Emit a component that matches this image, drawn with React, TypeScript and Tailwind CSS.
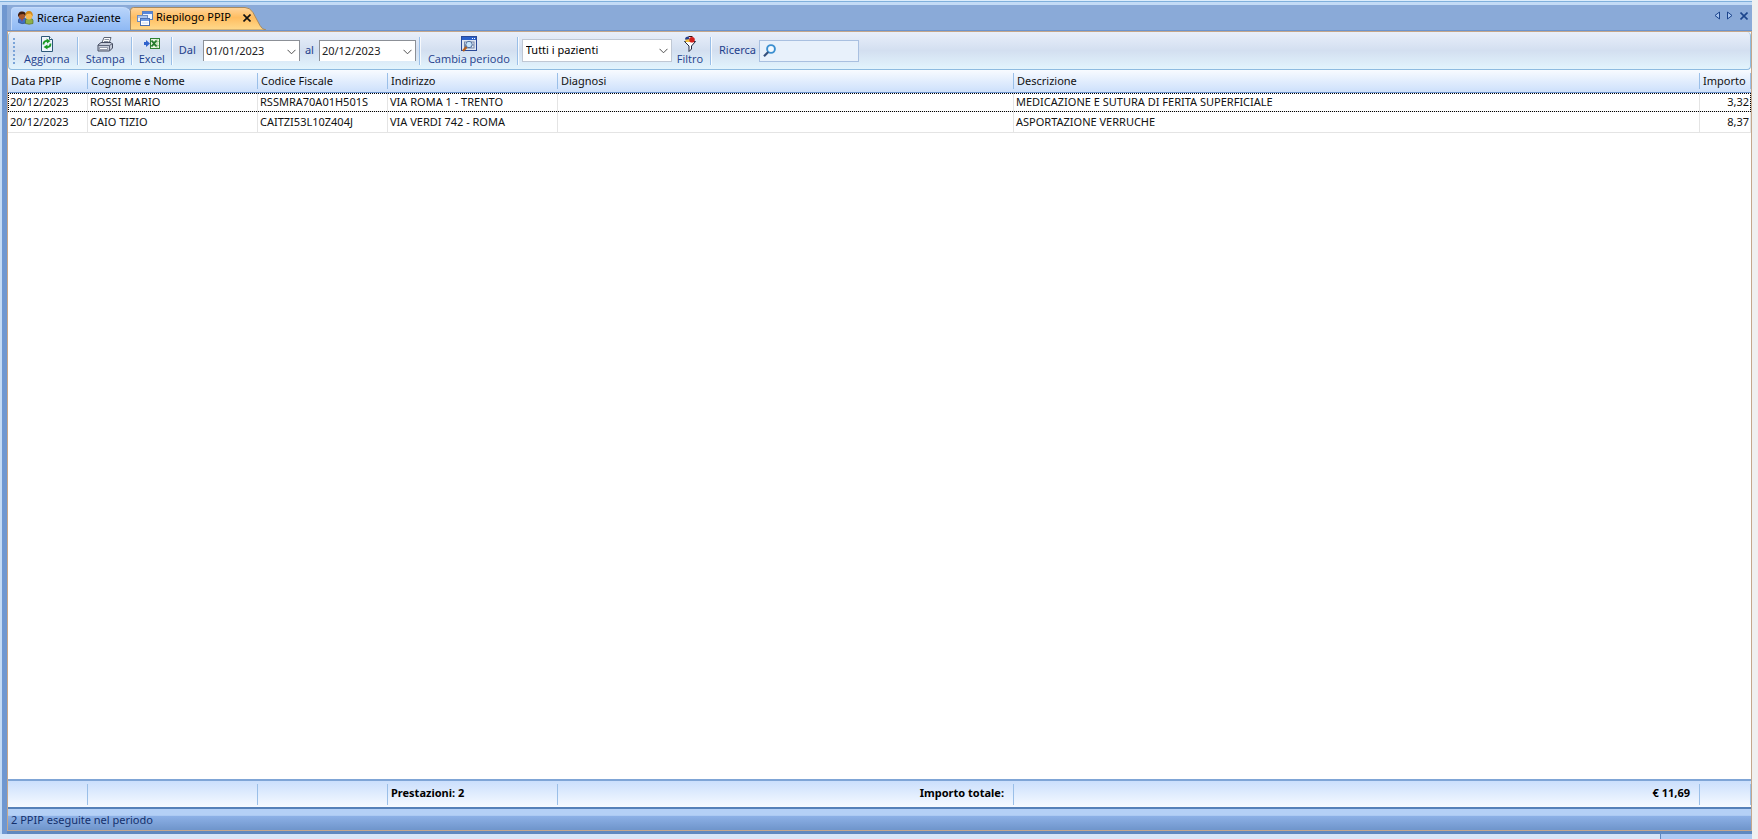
import type { ReactNode } from 'react';

const columns = [
  { key: 'data', label: 'Data PPIP', width: 'w-[80px]' },
  { key: 'nome', label: 'Cognome e Nome', width: 'w-[170px]' },
  { key: 'codice', label: 'Codice Fiscale', width: 'w-[130px]' },
  { key: 'indirizzo', label: 'Indirizzo', width: 'w-[170px]' },
  { key: 'diagnosi', label: 'Diagnosi', width: 'w-[456px]' },
  { key: 'descrizione', label: 'Descrizione', width: '' },
  { key: 'importo', label: 'Importo', width: 'w-[51px]' },
] as const;

type Row = Record<(typeof columns)[number]['key'], string>;

const rows: Row[] = [
  {
    data: '20/12/2023',
    nome: 'ROSSI MARIO',
    codice: 'RSSMRA70A01H501S',
    indirizzo: 'VIA ROMA 1 - TRENTO',
    diagnosi: '',
    descrizione: 'MEDICAZIONE E SUTURA DI FERITA SUPERFICIALE',
    importo: '3,32',
  },
  {
    data: '20/12/2023',
    nome: 'CAIO TIZIO',
    codice: 'CAITZI53L10Z404J',
    indirizzo: 'VIA VERDI 742 - ROMA',
    diagnosi: '',
    descrizione: 'ASPORTAZIONE VERRUCHE',
    importo: '8,37',
  },
];

function UsersIcon() {
  return (
    <svg width="17" height="16" viewBox="0 0 17 16" aria-hidden="true">
      <path d="M1.5 12.500V10q0-2 2.500-2h3q2 0 2 2v3q-4 1.500-7.500-.5z" fill="#3f6fc4" stroke="#20407c" strokeWidth=".6" />
      <path d="M8.500 13.500v-3q0-2 2.500-2h2q3 0 3 2v3q-4 1.500-7.500 0z" fill="#8fb04a" stroke="#4f6a1c" strokeWidth=".6" />
      <path d="M4 8l1 4 1-4z" fill="#d8281c" />
      <ellipse cx="4.800" cy="5.500" rx="3.300" ry="3.800" fill="#a8582c" />
      <path d="M1 7Q.5 1.500 5 1.500T9 6L6.500 4 3 4.500z" fill="#3c1c10" />
      <ellipse cx="12" cy="5.500" rx="3.400" ry="4" fill="#f6b850" />
      <path d="M8.500 6Q8 1 12 1t3.800 5.500L13.500 3.500l-3.500.5z" fill="#d08a1c" />
    </svg>
  );
}

function WindowsIcon() {
  return (
    <svg width="16" height="16" viewBox="0 0 16 16" aria-hidden="true">
      <rect x="5.500" y="1.500" width="10" height="8" fill="#eef4fd" stroke="#5c80bc" />
      <path d="M6 2h9v2H6z" fill="#5585dc" />
      <rect x=".5" y="5.500" width="10" height="6" fill="#f4f8fe" stroke="#6c8cc0" />
      <path d="M1 6h9v2H1z" fill="#a9c4ee" />
      <rect x="3.500" y="8.500" width="9" height="7" fill="#fff" stroke="#4a70b4" />
      <path d="M4 9h8v2H4z" fill="#6f9be4" />
      <path d="M5 13h6" stroke="#c8d8f0" />
    </svg>
  );
}

function RefreshIcon() {
  return (
    <svg width="16" height="16" viewBox="0 0 16 16" aria-hidden="true">
      <path d="M2.500.5h8l3 3v12h-11z" fill="#eef5fd" stroke="#2c5878" />
      <path d="M10.500.5v3h3" fill="#fff" stroke="#2c5878" />
      <path d="M4.500 8.500Q4.500 4.800 8 4.800M11.500 7.500Q11.500 11.200 8 11.200" fill="none" stroke="#1a9a24" strokeWidth="1.800" />
      <path d="M7.500 2.500l4 2.500-3.500 2.500zM8.500 8.500v5L4.500 11z" fill="#1a9a24" />
    </svg>
  );
}

function PrinterIcon() {
  return (
    <svg width="16" height="16" viewBox="0 0 16 16" aria-hidden="true">
      <path d="M5 6.500l2-5h7l-2 6z" fill="#fff" stroke="#5c6474" />
      <path d="M7.500 3.500H12M7 5.500h4.500" stroke="#8890a0" />
      <path d="M1 9l3-2.500h10L15.500 8v4L12.500 15H1z" fill="#c6ccda" stroke="#454c60" />
      <path d="M1 9.500h11.500l3-2M12.500 9.500V15" fill="none" stroke="#5c6478" />
      <path d="M2.500 11.500h8v2h-8z" fill="#fff" stroke="#767e92" strokeWidth=".7" />
    </svg>
  );
}

function ExcelIcon() {
  return (
    <svg width="16" height="16" viewBox="0 0 16 16" aria-hidden="true">
      <path d="M0 6h2V4l4 3.500L2 11V9H0z" fill="#2f62cc" />
      <rect x="6.500" y="2.500" width="9" height="10" fill="#e9f5df" stroke="#2f8232" />
      <path d="M13 3v9M7 5.500h8M7 9.500h8" stroke="#a8cf9c" />
      <path d="M7.500 4.500l5 6M12.500 4.500l-5 6" stroke="#237a2a" strokeWidth="1.800" />
    </svg>
  );
}

function PeriodIcon() {
  return (
    <svg width="16" height="16" viewBox="0 0 16 16" aria-hidden="true">
      <rect x=".5" y=".5" width="15" height="14" fill="#dfe6f2" stroke="#2a4a98" />
      <path d="M1 1h14v3H1z" fill="#2c62cc" />
      <path d="M11 2h1v1h-1zM13 2h1v1h-1z" fill="#fff" />
      <path d="M3 5.500h10.500v7H3z" fill="#7486a8" />
      <path d="M4 6.500h2v2H4zM10.500 6.500h2v2h-2zM10.500 9.500h2v2h-2z" fill="#eef2f8" />
      <circle cx="8" cy="8.500" r="3.200" fill="#c4e2fa" stroke="#54709c" />
      <path d="M5.500 11L2 15" stroke="#b45e1c" strokeWidth="2.400" />
    </svg>
  );
}

function FilterIcon() {
  return (
    <svg width="16" height="16" viewBox="0 0 16 16" aria-hidden="true">
      <path d="M2.500 5.500h11L9.500 10v3L7 15.500V10z" fill="#fff" stroke="#20243c" />
      <path d="M3.500 6V3L7 2.500 8.500 6z" fill="#f0c040" />
      <path d="M3 3.500Q3 .5 6.500.5L7.500 3 5 3.500z" fill="#243c90" />
      <circle cx="10" cy="3.800" r="2.800" fill="#d2201c" />
      <path d="M6.500.5h4" stroke="#401010" />
    </svg>
  );
}

function SearchIcon() {
  return (
    <svg width="13" height="13" viewBox="0 0 13 13" className="shrink-0" aria-hidden="true">
      <circle cx="8" cy="5" r="3.900" fill="#f4faff" stroke="#3a8fd0" strokeWidth="1.900" />
      <path d="M5.200 8L1 12.200" stroke="#34507c" strokeWidth="2.200" />
    </svg>
  );
}

function Chevron() {
  return (
    <svg className="pointer-events-none absolute top-[9px] right-1" width="9" height="6" viewBox="0 0 9 6" aria-hidden="true">
      <path d="M.5.8l4 4 4-4" fill="none" stroke="#505050" />
    </svg>
  );
}

function Separator() {
  return <div className="h-7 w-[2px] shrink-0 border-l border-[#9abfe8] bg-white/80" />;
}

function ToolButton({ icon, label }: { icon: ReactNode; label: string }) {
  return (
    <button
      type="button"
      className="flex h-8 shrink-0 flex-col items-center pt-px font-['Open_Sans',sans-serif] text-[11px] leading-[14px] text-[#1e3f8c]"
    >
      {icon}
      {label}
    </button>
  );
}

function DateSelect({ id, value }: { id: string; value: string }) {
  return (
    <div className="relative">
      <select
        id={id}
        defaultValue={value}
        className="block h-[21px] w-[97px] appearance-none border border-b-0 border-[#8c9097] bg-white pl-[2px] text-[11px] leading-4 text-[#222]"
      >
        <option>{value}</option>
      </select>
      <Chevron />
    </div>
  );
}

function Tabs() {
  return (
    <div className="flex h-[26px] items-end border-b border-[#6c93cc] bg-[#8aaad8] pl-1">
      <nav className="flex h-[23px] text-[11px] text-black">
        <a
          href="#ricerca"
          className="flex w-[120px] items-center gap-[3px] rounded-tl rounded-tr-lg border border-b-0 border-[#c3dafa] bg-linear-to-b from-[#b8d4fa] to-[#8fb9f4] pb-[2px] pl-[5px] whitespace-nowrap"
        >
          <UsersIcon />
          Ricerca Paziente
        </a>
        <div className="relative -ml-px flex w-[136px] items-center pb-[2px]">
          <svg className="absolute inset-0" width="136" height="23" viewBox="0 0 136 23" aria-hidden="true">
            <defs>
              <linearGradient id="active-tab" x1="0" y1="0" x2="0" y2="1">
                <stop offset="0" stopColor="#ffd59c" />
                <stop offset=".45" stopColor="#ffbd60" />
                <stop offset="1" stopColor="#ffda8c" />
              </linearGradient>
            </defs>
            <path d="M.5 23V3.500q0-3 3-3H115q5 0 8 5l7 13q2 4 6 4.500z" fill="url(#active-tab)" stroke="#a98a5e" />
          </svg>
          <a href="#riepilogo" className="relative flex items-center gap-[3px] pl-[7px] whitespace-nowrap">
            <WindowsIcon />
            Riepilogo PPIP
          </a>
          <button type="button" aria-label="Chiudi Riepilogo PPIP" className="relative ml-3">
            <svg width="8" height="8" viewBox="0 0 8 8" aria-hidden="true">
              <path d="M.5.5l7 7M7.500.5l-7 7" stroke="#111" strokeWidth="1.600" />
            </svg>
          </button>
        </div>
      </nav>
      <div className="mr-1 mb-[10px] ml-auto flex items-center gap-[7px]">
        <button type="button" aria-label="Scheda precedente">
          <svg width="6" height="9" viewBox="0 0 6 9" aria-hidden="true">
            <path d="M5.500 1v7L1 4.500z" fill="#a9c6f0" stroke="#1c458c" />
          </svg>
        </button>
        <button type="button" aria-label="Scheda successiva">
          <svg width="6" height="9" viewBox="0 0 6 9" aria-hidden="true">
            <path d="M.5 1v7L5 4.500z" fill="#a9c6f0" stroke="#1c458c" />
          </svg>
        </button>
        <button type="button" aria-label="Chiudi scheda">
          <svg width="8" height="8" viewBox="0 0 8 8" aria-hidden="true">
            <path d="M.5.5l7 7M7.500.5l-7 7" stroke="#1c458c" strokeWidth="1.600" />
          </svg>
        </button>
      </div>
    </div>
  );
}

function Toolbar() {
  return (
    <div className="flex h-[38px] items-center rounded border border-t-0 border-[#8ebbe0] bg-linear-to-b from-[#e9effa] via-[#d3dff0] to-[#e2f4fd] text-[11px] text-[#1e3f8c]">
      <div className="ml-1 h-[26px] border-l-2 border-dotted border-[#7ba4d8]" />
      <div className="flex items-center pl-[9px]">
        <ToolButton icon={<RefreshIcon />} label="Aggiorna" />
        <div className="px-[7px]"><Separator /></div>
        <ToolButton icon={<PrinterIcon />} label="Stampa" />
        <div className="px-[6px]"><Separator /></div>
        <ToolButton icon={<ExcelIcon />} label="Excel" />
        <div className="px-[6px]"><Separator /></div>
        <label htmlFor="dal" className="pr-[7px]">Dal</label>
        <DateSelect id="dal" value="01/01/2023" />
        <label htmlFor="al" className="px-[5px]">al</label>
        <DateSelect id="al" value="20/12/2023" />
        <div className="pr-[7px] pl-[3px]"><Separator /></div>
        <ToolButton icon={<PeriodIcon />} label="Cambia periodo" />
        <div className="pr-[3px] pl-[7px]"><Separator /></div>
        <div className="relative">
          <select
            aria-label="Pazienti"
            defaultValue="Tutti i pazienti"
            className="block h-[23px] w-[150px] appearance-none border border-[#c0c8d4] bg-white pl-[3px] text-[11px] text-black"
          >
            <option>Tutti i pazienti</option>
          </select>
          <Chevron />
        </div>
        <div className="w-[5px]" />
        <ToolButton icon={<FilterIcon />} label="Filtro" />
        <div className="px-[7px]"><Separator /></div>
        <label htmlFor="ricerca" className="pr-[3px]">Ricerca</label>
        <div className="flex h-[22px] w-[100px] items-center border border-[#a9c0e0] bg-[#e8f1fb] pl-[3px]">
          <SearchIcon />
          <input id="ricerca" type="text" className="w-full min-w-0 bg-transparent pl-1 outline-none" />
        </div>
      </div>
    </div>
  );
}

function Columns() {
  return (
    <colgroup>
      {columns.map((column) => (
        <col key={column.key} className={column.width} />
      ))}
    </colgroup>
  );
}

function DataTable() {
  return (
    <table className="w-full table-fixed border-separate border-spacing-0 text-[11px] leading-4 text-[#111]">
      <Columns />
      <thead>
        <tr className="h-[23px] bg-linear-to-b from-[#f8fbff] to-[#cbdffb]">
          {columns.map((column) => (
            <th key={column.key} scope="col" className="border-b border-[#6c93cc] p-0 text-left font-normal">
              <div className="my-[2px] border-r border-[#9abfe8] pl-[3px] whitespace-nowrap">{column.label}</div>
            </th>
          ))}
        </tr>
      </thead>
      <tbody>
        {rows.map((row, index) => (
          <tr key={row.codice} className={index === 0 ? 'h-[19px] outline-1 -outline-offset-1 outline-black outline-dotted' : 'h-[21px]'}>
            {columns.map((column) => (
              <td
                key={column.key}
                className={`border-r border-b border-[#e4e4e4] pt-0 pb-px whitespace-nowrap ${column.key === 'importo' ? 'pr-px text-right' : 'pl-[2px]'}`}
              >
                {row[column.key]}
              </td>
            ))}
          </tr>
        ))}
      </tbody>
    </table>
  );
}

function Totals() {
  const totals: Record<string, string> = {
    indirizzo: 'Prestazioni: 2',
    diagnosi: 'Importo totale:',
    descrizione: '€ 11,69',
  };

  return (
    <table className="w-full table-fixed border-separate border-spacing-0 border-y-2 border-t-[#7fa5d6] border-b-[#5580b8] bg-linear-to-b from-[#cbdffc] to-[#f6faff] text-[11px] text-black">
      <Columns />
      <tbody>
        <tr className="h-[26px]">
          {columns.map((column) => (
            <td key={column.key} className="p-0 font-bold">
              <div className={`h-[21px] border-r border-[#9abfe8] leading-[17px] ${column.key === 'indirizzo' ? 'pl-[3px]' : 'pr-[9px] text-right'}`}>
                {totals[column.key]}
              </div>
            </td>
          ))}
        </tr>
      </tbody>
    </table>
  );
}

export default function App() {
  return (
    <div className="flex h-screen flex-col overflow-hidden bg-[#f0f0f0] pr-[6px] font-['Noto_Sans','Open_Sans',sans-serif]">
      <div className="h-[5px] shrink-0 border-t border-[#dcecfb] bg-[#c3dbf6]">
        <div className="h-px bg-[#7fb0dc]" />
      </div>
      <div className="flex min-h-0 flex-1 flex-col border-l-2 border-[#c3dbf6]">
        <div className="flex min-h-0 flex-1 flex-col border-l-[5px] border-[#6f97d0]">
          <Tabs />
          <main className="flex min-h-0 flex-1 flex-col border border-[#c4a78c] bg-white">
            <Toolbar />
            <div className="min-h-0 flex-1">
              <DataTable />
            </div>
            <Totals />
            <footer className="h-[21px] bg-linear-to-b from-[#b4d0f6] from-30% via-[#8cb0e6] via-35% to-[#6f95cb] pl-[3px] text-[11px] leading-[21px] text-[#14306c]">
              2 PPIP eseguite nel periodo
            </footer>
          </main>
          <div className="h-[3px] shrink-0 bg-[#5f88bf]" />
        </div>
      </div>
      <div className="flex h-[5px] shrink-0 bg-[#d7e6f8]">
        <div className="ml-auto w-[92px] border-l border-[#5f88bf] bg-[#aecbf4]" />
      </div>
    </div>
  );
}
